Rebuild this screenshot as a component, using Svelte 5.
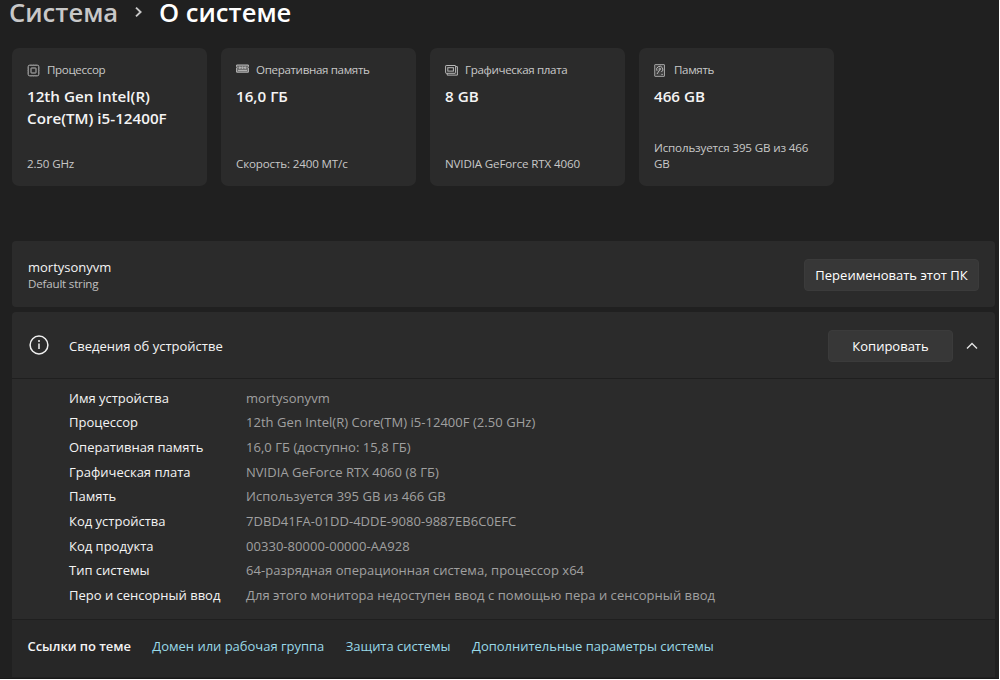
<script lang="ts">
  interface SpecCard {
    icon: string
    label: string
    value: string
    note: string
  }

  const cards: SpecCard[] = [
    { icon: 'cpu', label: 'Процессор', value: '12th Gen Intel(R) Core(TM) i5-12400F', note: '2.50 GHz' },
    { icon: 'ram', label: 'Оперативная память', value: '16,0 ГБ', note: 'Скорость: 2400 МТ/с' },
    { icon: 'gpu', label: 'Графическая плата', value: '8 GB', note: 'NVIDIA GeForce RTX 4060' },
    { icon: 'disk', label: 'Память', value: '466 GB', note: 'Используется 395 GB из 466 GB' }
  ]

  const details = [
    ['Имя устройства', 'mortysonyvm'],
    ['Процессор', '12th Gen Intel(R) Core(TM) i5-12400F (2.50 GHz)'],
    ['Оперативная память', '16,0 ГБ (доступно: 15,8 ГБ)'],
    ['Графическая плата', 'NVIDIA GeForce RTX 4060 (8 ГБ)'],
    ['Память', 'Используется 395 GB из 466 GB'],
    ['Код устройства', '7DBD41FA-01DD-4DDE-9080-9887EB6C0EFC'],
    ['Код продукта', '00330-80000-00000-AA928'],
    ['Тип системы', '64-разрядная операционная система, процессор x64'],
    ['Перо и сенсорный ввод', 'Для этого монитора недоступен ввод с помощью пера и сенсорный ввод']
  ]

  const links = ['Домен или рабочая группа', 'Защита системы', 'Дополнительные параметры системы']

  let expanded = $state(true)
</script>

<main class="settings">
  <nav class="breadcrumb">
    <span class="parent">Система</span>
    <svg class="separator" width="9" height="12" viewBox="0 0 9 12">
      <path d="M2 1.6 6.6 6 2 10.4" />
    </svg>
    <h1>О системе</h1>
  </nav>

  <section class="cards">
    {#each cards as card}
      <article class="card">
        <header class="card-label">
          <svg class="card-icon" width="13" height="13" viewBox="0 0 13 13">
            {#if card.icon === 'cpu'}
              <rect x="1.2" y="1.2" width="10.6" height="10.6" rx="1.4" />
              <rect x="4" y="4" width="5" height="5" rx=".4" />
              <path class="faint" d="M4 .5v1.5M6.5 .5v1.5M9 .5v1.5M4 11v1.5M6.5 11v1.5M9 11v1.5M.5 4h1.5M.5 6.5h1.5M.5 9h1.5M11 4h1.5M11 6.5h1.5M11 9h1.5" />
            {:else if card.icon === 'ram'}
              <path class="tint" d="M.6 1h11.8v1.7l-.6.6.6.6v4.3H.6V3.9l.6-.6-.6-.6z" />
              <path d="M3.2 3h1.2v1.3H3.2zM5.9 3h1.2v1.3H5.9zM8.6 3h1.2v1.3H8.6zM2 6.4h9" />
            {:else if card.icon === 'gpu'}
              <rect x=".6" y="1.5" width="10" height="7.8" rx=".6" />
              <rect x="2.8" y="3.7" width="5.6" height="3.4" />
              <path d="M10.6 2.6h1.8v8.5H2.2V9.3" />
            {:else}
              <rect class="shade" x=".7" y=".6" width="9.8" height="11.8" rx=".4" />
              <path d="M3 6.8A3.1 3.1 0 1 1 7.4 8" />
              <circle cx="5.8" cy="5" r=".8" />
              <path d="M5.6 6 3 10M7.4 10.4h1.4" />
            {/if}
          </svg>
          <span>{card.label}</span>
        </header>
        <strong class="card-value">{card.value}</strong>
        <p class="card-note">{card.note}</p>
      </article>
    {/each}
  </section>

  <section class="panel rename">
    <div class="pc">
      <div>mortysonyvm</div>
      <div class="pc-model">Default string</div>
    </div>
    <button class="button">Переименовать этот ПК</button>
  </section>

  <section class="panel device">
    <header class="device-header">
      <svg class="info" width="20" height="20" viewBox="0 0 20 20">
        <circle cx="10" cy="10" r="8.9" />
        <path d="M10 8.4v5.6" />
        <circle class="dot" cx="10" cy="6.1" r="1" />
      </svg>
      <span class="device-title">Сведения об устройстве</span>
      <button class="button copy">Копировать</button>
      <button class="toggle" aria-label="Сведения об устройстве" aria-expanded={expanded} onclick={() => (expanded = !expanded)}>
        <svg class:collapsed={!expanded} width="12" height="8" viewBox="0 0 12 8">
          <path d="M1 6.5 6 1.5l5 5" />
        </svg>
      </button>
    </header>

    {#if expanded}
      <dl class="details">
        {#each details as [name, value]}
          <dt>{name}</dt>
          <dd>{value}</dd>
        {/each}
      </dl>
    {/if}

    <footer class="related">
      <span class="related-title">Ссылки по теме</span>
      {#each links as link}
        <a href="#related">{link}</a>
      {/each}
    </footer>
  </section>
</main>

<style>
  :global(body) {
    background: #fff;
    overflow: hidden;
  }

  .settings {
    box-sizing: border-box;
    width: 999px;
    height: 679px;
    padding: 0 4px 0 12px;
    border-bottom: 1px solid #191919;
    background: #202020;
    color: #f4f4f4;
    font-family: 'Open Sans', 'Noto Sans', sans-serif;
    font-size: 13px;
    line-height: 18px;
  }

  .breadcrumb {
    display: flex;
    align-items: center;
    height: 26px;
    margin-left: -3px;
    font-size: 25.6px;
    font-weight: 600;
    line-height: 26px;
  }

  .parent {
    width: 107px;
    color: #c8c8c8;
    white-space: nowrap;
  }

  .separator {
    margin: 0 16px 2px 18px;
    fill: none;
    stroke: #c8c8c8;
    stroke-width: 1.9;
  }

  h1 {
    margin: 0;
    color: #fff;
    font: inherit;
    white-space: nowrap;
  }

  .cards {
    display: grid;
    grid-template-columns: repeat(4, 195px);
    gap: 14px;
    margin-top: 22px;
  }

  .card {
    box-sizing: border-box;
    display: flex;
    flex-direction: column;
    height: 138px;
    padding: 13px 15px 14px;
    border-radius: 7px;
    background: #2b2b2b;
  }

  .card-label {
    display: flex;
    align-items: center;
    gap: 7px;
    height: 18px;
    color: #c8c8c8;
    font-size: 11.6px;
    letter-spacing: -0.35px;
    white-space: nowrap;
  }

  .card-icon {
    fill: none;
    stroke: #b8b8b8;
    stroke-width: 1;
  }

  .card-icon .tint {
    fill: #686868;
  }

  .card-icon .shade {
    fill: #404040;
    stroke: #a0a0a0;
  }

  .card-icon .faint {
    stroke: #858585;
    stroke-width: 0.7;
  }

  .card-value {
    margin-top: 6px;
    font-size: 15.2px;
    font-weight: 600;
    line-height: 22px;
  }

  .card-note {
    margin: auto 0 0;
    color: #c8c8c8;
    font-size: 11.6px;
    letter-spacing: -0.15px;
    line-height: 16px;
  }

  .panel {
    border-radius: 4px;
    background: #2b2b2b;
  }

  .rename {
    display: flex;
    align-items: center;
    justify-content: space-between;
    height: 66px;
    margin-top: 55px;
    padding: 0 16px;
  }

  .pc {
    padding-top: 2px;
  }

  .pc-model {
    color: #c0c0c0;
    font-size: 11.6px;
    letter-spacing: -0.2px;
    line-height: 16px;
  }

  .button {
    box-sizing: border-box;
    width: 175px;
    height: 32px;
    padding: 0;
    border: 1px solid #3b3b3b;
    border-radius: 4px;
    background: #373737;
    color: #fff;
    font: inherit;
    white-space: nowrap;
    transform: translateY(1px);
  }

  .device {
    margin-top: 5px;
  }

  .device-header {
    display: flex;
    align-items: center;
    height: 66px;
    padding: 0 17px 0 16px;
    border-bottom: 1px solid #1f1f1f;
  }

  .info {
    margin-right: 20px;
    margin-left: 1px;
    fill: none;
    stroke: #f0f0f0;
    stroke-width: 1.5;
  }

  .info .dot {
    fill: #f0f0f0;
    stroke: none;
  }

  .device-title {
    flex: 1;
    padding-top: 2px;
  }

  .copy {
    width: 125px;
  }

  .toggle {
    display: flex;
    margin-left: 13px;
    padding: 2px 0 0;
    border: none;
    background: none;
  }

  .toggle svg {
    fill: none;
    stroke: #e4e4e4;
    stroke-width: 1.4;
  }

  .toggle .collapsed {
    transform: rotate(180deg);
  }

  .details {
    display: grid;
    grid-template-columns: 177px 1fr;
    grid-auto-rows: 24.65px;
    align-items: center;
    margin: 0;
    padding: 6.5px 0 11.5px 57px;
    white-space: nowrap;
  }

  dd {
    margin: 0;
    color: #a0a0a0;
    letter-spacing: 0.04px;
  }

  .related {
    box-sizing: border-box;
    display: flex;
    align-items: center;
    gap: 21.5px;
    height: 58px;
    padding: 0 16px 4px 15.5px;
    border-top: 1px solid #1f1f1f;
    background: #272727;
    letter-spacing: -0.02px;
    white-space: nowrap;
  }

  .related-title {
    font-weight: 600;
    letter-spacing: -0.06px;
  }

  a {
    color: #99d9e8;
    text-decoration: none;
  }
</style>
